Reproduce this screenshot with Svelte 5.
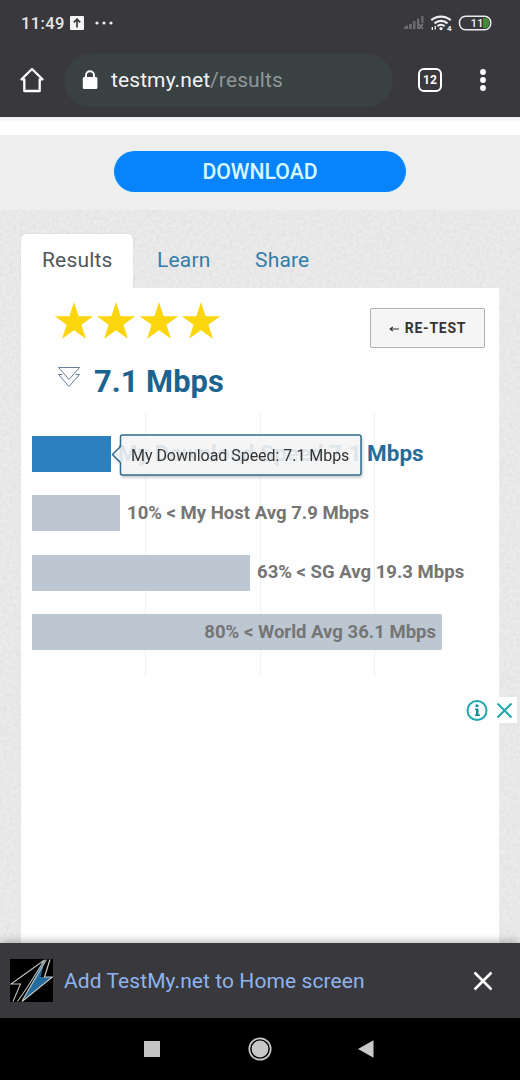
<script>
  const tabs = ['Results', 'Learn', 'Share'];
  const stars = [0, 1, 2, 3];
  const gridLines = [113, 228, 342];
  const bars = [
    { label: 'My Download Speed 7.1 Mbps', width: 79, kind: 'mine' },
    { label: '10% < My Host Avg 7.9 Mbps', width: 88, kind: 'host' },
    { label: '63% < SG Avg 19.3 Mbps', width: 218, kind: 'country' },
    { label: '80% < World Avg 36.1 Mbps', width: 410, kind: 'world' }
  ];
</script>

<div class="phone">
  <header class="chrome">
    <div class="status">
      <span class="time">11:49</span>
      <svg class="upload" width="14" height="14" viewBox="0 0 14 14"><rect width="14" height="14" rx="1" fill="#f4f4f5" /><path d="M7 11.5V3.5M3.8 6.4L7 3.2l3.2 3.2" fill="none" stroke="#39383d" stroke-width="1.7" /></svg>
      <svg class="dots" width="18" height="4" viewBox="0 0 18 4" fill="#eee"><circle cx="2" cy="2" r="1.6" /><circle cx="9" cy="2" r="1.6" /><circle cx="16" cy="2" r="1.6" /></svg>
      <svg class="signals" width="90" height="18" viewBox="0 0 90 18">
        <g fill="#6b6a6f"><path d="M1 15v-2l4-2v4z" /><rect x="6" y="10" width="2.8" height="5" /><rect x="10" y="7" width="2.5" height="8" /><rect x="14" y="4.500" width="2.200" height="10.500" /><rect x="18.300" y="2" width="2.200" height="7" /></g>
        <path d="M16 10l4 5m0-5l-4 5" stroke="#77767b" stroke-width="1.400" />
        <g fill="none" stroke="#f0f0f2" stroke-width="2.200"><path d="M28.300 6.200a15 15 0 0 1 19.400 0M31.500 9.300a10 10 0 0 1 13 0M34.400 12.200a5.500 5.500 0 0 1 7.200 0" /></g>
        <circle cx="38" cy="14.600" r="1.600" fill="#f0f0f2" />
        <path d="M29.300 13v3M32.300 12v3.500" stroke="#e7e7e8" stroke-width="1.400" />
        <text x="44" y="17" class="wifi-no">4</text>
        <path d="M80 4h2.800q3.300 0 3.300 5t-3.300 5H80z" fill="#3f8c35" />
        <rect x="56.500" y="2.200" width="31.200" height="13.600" rx="6" fill="none" stroke="#ececef" stroke-width="1.500" />
        <text x="67.500" y="13.200" class="battery-no">11</text>
      </svg>
    </div>
    <div class="toolbar">
      <svg class="home" width="26" height="26" viewBox="0 0 26 26"><path d="M5.300 24V12.300H2.500L13 2l10.500 10.300h-2.800V24z" fill="none" stroke="#fff" stroke-width="2.300" stroke-linejoin="round" /></svg>
      <div class="url">
        <svg width="16" height="20" viewBox="0 0 16 20"><path d="M4 8V5.200a4 4 0 0 1 8 0V8" fill="none" stroke="#fff" stroke-width="1.900" /><rect x=".8" y="7" width="14.600" height="12" rx="1.500" fill="#fff" /></svg>
        <span class="address">testmy.net<i>/results</i></span>
      </div>
      <div class="tab-count">12</div>
      <svg class="more" width="8" height="24" viewBox="0 0 8 24" fill="#fff"><circle cx="4" cy="4" r="2.900" /><circle cx="4" cy="12" r="2.900" /><circle cx="4" cy="20" r="2.900" /></svg>
    </div>
  </header>

  <main>
    <svg class="paper" width="520" height="827"><filter id="grain" x="0" y="0" width="100%" height="100%"><feTurbulence type="fractalNoise" baseFrequency=".3" numOctaves="2" /><feColorMatrix type="matrix" values=".1 0 0 0 .836  .1 0 0 0 .836  .1 0 0 0 .836  0 0 0 0 1" color-interpolation-filters="sRGB" /></filter><rect width="520" height="827" filter="url(#grain)" /></svg>
    <div class="strip"></div>
    <div class="ad"><button class="download"><span>DOWNLOAD</span></button></div>
    <nav class="tabs">
      {#each tabs as tab, i}<span class:active={i === 0} class="tab tab{i}">{tab}</span>{/each}
    </nav>
    <section class="card">
      <div class="summary">
        <div class="score">
          <div class="stars">
            {#each stars as star}<svg width="42" height="42" viewBox="0 0 42 42"><path d="M21 2l4.600 14.200H40.200L28.400 24.800 32.900 38.800 21 30.200 9.100 38.800l4.500-14L1.800 16.200h14.600z" fill="#fbd50d" /></svg>{/each}
          </div>
          <div class="speed">
            <svg width="24" height="24" viewBox="0 0 24 24" fill="none" stroke="#657f99" stroke-width="1"><path d="M1.500 2.500h21L12 14.500zM5.500 9.500h-4L12 21.500 22.500 9.500h-4" /></svg>
            <span>7.1 Mbps</span>
          </div>
        </div>
        <button class="retest"><svg width="10" height="8" viewBox="0 0 10 8"><path d="M1 5h9M3.800 3L1.200 5l2.600 2" fill="none" stroke="#333" stroke-width="1.200" /></svg><span>RE-TEST</span></button>
      </div>
      <div class="chart">
        {#each gridLines as x}<i class="line" style="left:{x}px"></i>{/each}
        {#each bars as bar}
          <div class="row {bar.kind}">
            <div class="bar" style="width:{bar.width}px"></div>
            <span class="label">{bar.label}</span>
          </div>
        {/each}
        <div class="tooltip">
          <svg width="254" height="48" viewBox="0 0 254 48"><path d="M11.500 3H248a2 2 0 0 1 2 2V41a2 2 0 0 1-2 2H11.500a2 2 0 0 1-2-2V30.500L1.500 22.500l8-8V5a2 2 0 0 1 2-2z" fill="#f9f9f9" fill-opacity=".87" stroke="#2d6c8e" stroke-width="1.500" /></svg>
          <span>My Download Speed: 7.1 Mbps</span>
        </div>
      </div>
    </section>
    <div class="ad-controls">
      <svg width="52" height="26" viewBox="0 0 52 26"><path fill="#fff" d="M29 0h23v26H29z" /><g fill="none" stroke="#22a6ae" stroke-width="2"><circle cx="12" cy="13.500" r="9.500" /><path d="M32.500 6.500l14 14m0-14l-14 14" /></g><path d="M10.500 7.500h3v2.500h-3zM10 11.500h3.500v6H15v1.500h-5v-1.500h1v-4.500h-1z" fill="#168c98" /></svg>
    </div>
  </main>

  <aside class="install">
    <svg class="logo" width="43" height="43" viewBox="0 0 43 43"><rect width="43" height="43" fill="#000" /><path d="M35 .500L30.500 18H42L12 42 34 1z" fill="#246c9f" /><path d="M40 .500L34.500 18H42.500L12 42.500" fill="none" stroke="#cacbc3" stroke-width="1.200" /><path d="M34.500 1L1 25h9.500L3 42.500M34.500 1L17.500 28 7.500 42.500M36.500 .500L22 25 12 42" fill="none" stroke="#c0c0b8" stroke-width="1.100" /></svg>
    <span>Add TestMy.net to Home screen</span>
    <svg class="close" width="20" height="20" viewBox="0 0 20 20"><path d="M1.500 1.500l17 17m0-17l-17 17" stroke="#fff" stroke-width="2.500" /></svg>
  </aside>
  <footer>
    <svg width="16" height="16"><rect width="16" height="16" fill="#c4c4c4" /></svg>
    <svg width="26" height="26" viewBox="0 0 26 26"><circle cx="13" cy="13" r="10.700" fill="none" stroke="#c8c8c8" stroke-width="1.700" /><circle cx="13" cy="13" r="8.400" fill="#c8c8c8" /></svg>
    <svg width="16" height="18" viewBox="0 0 16 18"><path d="M0 9L15.500.3v17.400z" fill="#cacaca" /></svg>
  </footer>
</div>

<style>
  :global(body) { margin: 0; }
  * { box-sizing: border-box; }
  svg { display: block; flex: none; }
  button { border: 0; padding: 0; margin: 0; font: inherit; }
  .phone { width: 520px; height: 1080px; overflow: hidden; display: flex; flex-direction: column; font-family: Roboto, sans-serif; white-space: nowrap; background: #000; }
  .chrome { height: 117px; flex: none; background: #39383d; color: #fff; }
  .status { height: 46px; display: flex; align-items: center; padding: 0 27px 0 21px; }
  .time { width: 43px; font-size: 16.500px; font-weight: 500; letter-spacing: .4px; color: #e6e6e8; }
  .upload { margin-left: 6px; }
  .dots { margin-left: 11px; }
  .signals { margin-left: auto; }
  .wifi-no { font: 700 8px Roboto, sans-serif; fill: #f0f0f2; }
  .battery-no { font: 500 11.500px Roboto, sans-serif; fill: #f0f0f2; }
  .toolbar { display: flex; align-items: center; height: 68px; padding: 0 33px 0 19px; }
  .url { width: 329px; height: 53px; margin-left: 19px; border-radius: 27px; background: #394143; display: flex; align-items: center; padding-left: 18px; }
  .address { margin-left: 13px; font-size: 21px; letter-spacing: .1px; color: #f2f3f3; }
  .address i { font-style: normal; color: #919698; }
  .tab-count { width: 24px; height: 24px; margin-left: 25px; border: 2.500px solid #fff; border-radius: 6px; display: grid; place-items: center; font-size: 12px; font-weight: 700; }
  .more { margin-left: auto; }
  main { position: relative; height: 826px; flex: none; display: flex; flex-direction: column; isolation: isolate; overflow: hidden; background: #e3e3e3; }
  .paper { position: absolute; inset: 0; z-index: -1; }
  .strip { height: 18px; flex: none; background: linear-gradient(#ebeaf0, #fff 5px); }
  .ad { height: 75px; flex: none; background: #eeeeee; display: flex; justify-content: center; align-items: flex-start; padding-top: 16px; }
  .download { width: 292px; height: 41px; border-radius: 21px; background: #0784fc; color: #d9f8ff; font-size: 21.200px; font-weight: 500; box-shadow: 0 0 3px #d4f6ff; }
  .tabs { height: 54px; flex: none; margin: 24px 21px 0; display: flex; }
  .tab { height: 54px; line-height: 52px; font-size: 21px; letter-spacing: .18px; color: #327da9; }
  .tab0 { width: 112px; padding-left: 21px; }
  .tab1 { margin-left: 24px; width: 98px; }
  .tab.active { background: #fff; color: #50575a; border-radius: 5px 5px 0 0; box-shadow: 0 0 1px #aaa; clip-path: inset(-2px -2px 0 -2px); }
  .card { width: 479px; height: 655px; flex: none; margin-left: 21px; background: #fefefe; display: flex; flex-direction: column; border-right: 1px solid #eee; }
  .summary { height: 125px; display: flex; justify-content: space-between; padding: 12px 14px 0 32px; }
  .stars { display: flex; gap: .4px; }
  .speed { display: flex; align-items: center; margin-top: 20px; height: 38px; }
  .speed svg { margin: -8px 0 0 4px; }
  .speed span { margin-left: 13px; color: #1c648f; font-size: 30.900px; font-weight: 700; }
  .retest { width: 115px; height: 40px; margin-top: 8px; border: 1px solid #b1b1b1; border-radius: 2px; background: #f5f5f5; display: flex; align-items: center; justify-content: center; gap: 6px; color: #333; font-size: 14px; font-weight: 700; letter-spacing: .75px; }
  .chart { position: relative; height: 264px; margin-left: 11px; padding-top: 22.500px; display: flex; flex-direction: column; gap: 23.500px; isolation: isolate; }
  .line { position: absolute; top: 0; bottom: 0; width: 1px; background: #f0f2f2; z-index: -1; }
  .row { display: flex; align-items: center; height: 36px; flex: none; }
  .bar { height: 36px; flex: none; background: #bcc7d2; }
  .mine .bar { background: #2d80be; }
  .label { margin: -1px 0 0 7px; font-size: 18.550px; font-weight: 700; color: #757575; }
  .mine .label { font-size: 22.500px; color: #266c99; }
  .world { display: grid; width: 410px; }
  .world .bar, .world .label { grid-area: 1 / 1; }
  .world .bar { border-radius: 0 2px 2px 0; }
  .world .label { justify-self: end; margin-right: 6px; }
  .tooltip { position: absolute; left: 79px; top: 19px; width: 254px; height: 48px; filter: drop-shadow(1px 2px 1px #0003); }
  .tooltip svg { position: absolute; inset: 0; }
  .tooltip span { position: relative; display: block; padding-left: 20px; line-height: 48px; font-size: 16px; letter-spacing: -.04px; color: #333; }
  .ad-controls { position: absolute; left: 465px; top: 580px; }
  .install { position: relative; height: 75px; flex: none; display: flex; align-items: center; padding: 0 27px 0 10px; background: #39383d; color: #8eb4ee; font-size: 21px; box-shadow: 0 -2px 8px #0004; }
  .install span { margin-left: 11px; letter-spacing: .08px; }
  .close { margin-left: auto; }
  footer { flex: 1; display: flex; align-items: center; padding-left: 144px; background: #000; }
  footer svg:nth-child(2) { margin-left: 87px; }
  footer svg:nth-child(3) { margin-left: 85px; }
</style>
